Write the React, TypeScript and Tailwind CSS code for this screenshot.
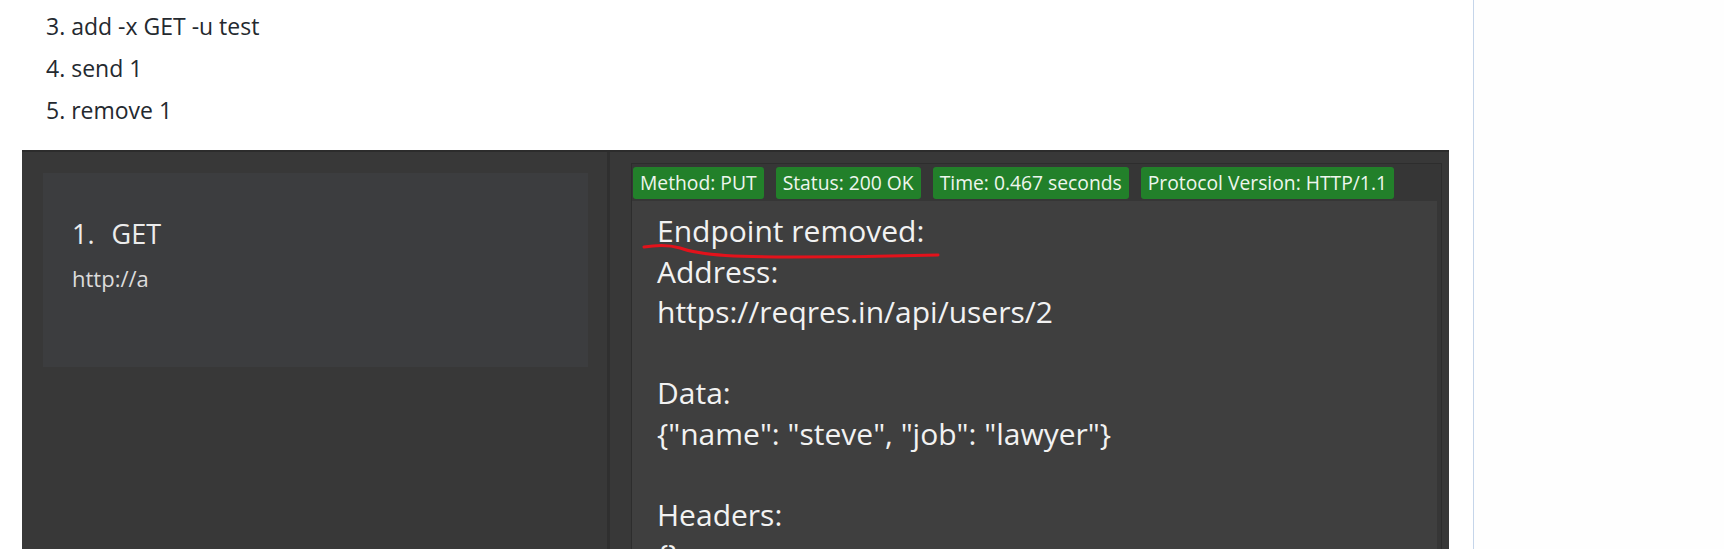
import React from "react";

const font = { fontFamily: '"Open Sans", "Noto Sans", sans-serif' };

const steps = ["3. add -x GET -u test", "4. send 1", "5. remove 1"];

const badges = [
  "Method: PUT",
  "Status: 200 OK",
  "Time: 0.467 seconds",
  "Protocol Version: HTTP/1.1",
];

const output = [
  "Endpoint removed:",
  "Address:",
  "https://reqres.in/api/users/2",
  "",
  "Data:",
  '{"name": "steve", "job": "lawyer"}',
  "",
  "Headers:",
  "{}",
];

function Underline() {
  return (
    <svg
      className="pointer-events-none absolute left-[10px] top-[41px]"
      width="300"
      height="24"
      viewBox="0 0 300 24"
    >
      <path
        d="M2 5 C 14 3, 28 3, 38 6 C 60 14, 100 15, 150 15 C 210 15, 260 14, 296 13"
        fill="none"
        stroke="#e3121b"
        strokeWidth="3"
        strokeLinecap="round"
      />
    </svg>
  );
}

export default function App() {
  return (
    <div className="flex h-[549px] overflow-hidden bg-white" style={font}>
      <div className="w-[1474px] shrink-0 border-r border-[#c5d5ea]">
        <ol className="pt-[5px] pl-[46px] text-[23px] text-[#24292f]">
          {steps.map((s) => (
            <li key={s} className="h-[42px] leading-[42px]">
              {s}
            </li>
          ))}
        </ol>

        <div className="mt-[19px] ml-[22px] flex h-[420px] w-[1427px] border-t-2 border-[#2c2c2c] bg-[#383838]">
          <div className="w-[585px] shrink-0 pt-[21px] pl-[21px]">
            <div className="h-[194px] w-[545px] bg-[#3c3d3f] pt-[43px] pl-[29px] text-[#ececec]">
              <div className="flex items-baseline gap-[17px] text-[27px] leading-[36px] font-medium">
                <span>1.</span>
                <span>GET</span>
              </div>
              <div className="mt-[11px] text-[22px] leading-[30px] text-[#dcdcdc]">
                http://a
              </div>
            </div>
          </div>

          <div className="w-[3px] shrink-0 bg-[#2f2f2f]" />

          <div className="flex-1 pt-[11px] pl-[21px] pr-[7px]">
            <div className="h-full border border-[#2d2d2d] bg-[#363636]">
              <div className="flex h-[37px] items-center gap-[12px] px-[1px]">
                {badges.map((b) => (
                  <span
                    key={b}
                    className="rounded-[3px] bg-[#22802a] px-[7px] text-[19.3px] leading-[32px] text-[#eef6ee]"
                  >
                    {b}
                  </span>
                ))}
              </div>
              <div className="relative h-full border-r-4 border-[#363636] bg-[#3f3f3f] pt-[10px] pl-[25px] text-[30px] leading-[40.5px] text-[#f2f2f2]">
                <Underline />
                {output.map((line, i) => (
                  <div key={i} className="h-[40.5px] whitespace-pre">
                    {line}
                  </div>
                ))}
              </div>
            </div>
          </div>
        </div>
      </div>
      <div className="flex-1 bg-[#fefefe]" />
    </div>
  );
}
